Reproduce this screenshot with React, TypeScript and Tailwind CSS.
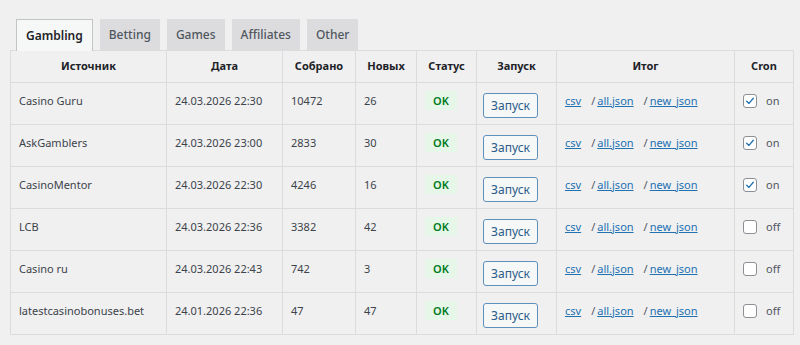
import { useState } from "react";

const tabs = ["Gambling", "Betting", "Games", "Affiliates", "Other"];

const rows = [
  { source: "Casino Guru", date: "24.03.2026 22:30", total: "10472", fresh: "26", cron: true },
  { source: "AskGamblers", date: "24.03.2026 23:00", total: "2833", fresh: "30", cron: true },
  { source: "CasinoMentor", date: "24.03.2026 22:30", total: "4246", fresh: "16", cron: true },
  { source: "LCB", date: "24.03.2026 22:36", total: "3382", fresh: "42", cron: false },
  { source: "Casino ru", date: "24.03.2026 22:43", total: "742", fresh: "3", cron: false },
  { source: "latestcasinobonuses.bet", date: "24.01.2026 22:36", total: "47", fresh: "47", cron: false },
];

// WP-style checkbox
const Check = ({ checked, onChange }: { checked: boolean; onChange: () => void }) => (
  <button
    onClick={onChange}
    className="w-[14px] h-[14px] border border-[#8c8f94] rounded-[3px] bg-white flex items-center justify-center shrink-0"
  >
    {checked && (
      <svg viewBox="0 0 20 20" className="w-[14px] h-[14px]">
        <path d="M4.5 10.5 L8.3 14 L15.5 5.5" fill="none" stroke="#2271b1" strokeWidth="2.2" strokeLinecap="round" strokeLinejoin="round" />
      </svg>
    )}
  </button>
);

export default function App() {
  const [active, setActive] = useState(0);
  const [cron, setCron] = useState(rows.map((r) => r.cron));

  const th = "border border-[#dcdcde] h-[32px] text-center font-bold text-[11px] text-[#1d2327] align-middle";
  const td = "border border-[#dcdcde] align-top px-[8px] pt-[10px] text-[11px] text-[#3c434a]";

  return (
    <div className="w-[800px] h-[345px] bg-[#f0f0f1] pt-[19px] font-['Noto_Sans','Open_Sans',sans-serif]">
      <div className="flex gap-[7px] pl-[16px] h-[31px]">
        {tabs.map((t, i) => (
          <button
            key={t}
            onClick={() => setActive(i)}
            className={
              i === active
                ? "px-[9px] h-[32px] border border-[#c3c4c7] border-b-0 bg-[#f6f7f7] text-[12px] font-semibold text-[#1d2327] relative z-10"
                : "px-[8px] h-[31px] border border-[#dcdcde] border-b-0 bg-[#dcdcde] text-[12px] font-medium text-[#50575e]"
            }
          >
            {t}
          </button>
        ))}
      </div>
      <div className="pl-[10px]">
        <table className="border-collapse border border-[#c3c4c7] w-[783px] table-fixed">
          <colgroup>
            <col className="w-[156px]" />
            <col className="w-[116px]" />
            <col className="w-[73px]" />
            <col className="w-[61px]" />
            <col className="w-[60px]" />
            <col className="w-[80px]" />
            <col className="w-[178px]" />
            <col className="w-[59px]" />
          </colgroup>
          <thead>
            <tr>
              <th className={th}>Источник</th>
              <th className={th}>Дата</th>
              <th className={th}>Собрано</th>
              <th className={th}>Новых</th>
              <th className={th}>Статус</th>
              <th className={th}>Запуск</th>
              <th className={th}>Итог</th>
              <th className={th}>Cron</th>
            </tr>
          </thead>
          <tbody>
            {rows.map((r, i) => (
              <tr key={r.source} className="h-[42px]">
                <td className={td}>{r.source}</td>
                <td className={td}>{r.date}</td>
                <td className={td}>{r.total}</td>
                <td className={td}>{r.fresh}</td>
                <td className={`${td} pl-[8px]`}>
                  <span className="font-semibold text-[#007a1c] bg-[#e6f6e8] px-[8px] py-[2px]">OK</span>
                </td>
                <td className={`${td} pl-[6px]`}>
                  <button className="w-[55px] h-[25px] border border-[#5f8fbd] rounded-[3px] bg-[#f6f7f7] text-[12px] text-[#2c5d8a]">
                    Запуск
                  </button>
                </td>
                <td className={`${td} text-[#2271b1]`}>
                  <a href="#" className="underline">csv</a>
                  <span className="ml-[10px] mr-[2px] text-[#50575e]">/</span>
                  <a href="#" className="underline">all.json</a>
                  <span className="ml-[10px] mr-[2px] text-[#50575e]">/</span>
                  <a href="#" className="underline">new_json</a>
                </td>
                <td className={td}>
                  <div className="flex items-center gap-[9px]">
                    <Check
                      checked={cron[i]}
                      onChange={() => setCron(cron.map((c, j) => (j === i ? !c : c)))}
                    />
                    <span className="text-[11px] text-[#50575e]">{cron[i] ? "on" : "off"}</span>
                  </div>
                </td>
              </tr>
            ))}
          </tbody>
        </table>
      </div>
    </div>
  );
}
